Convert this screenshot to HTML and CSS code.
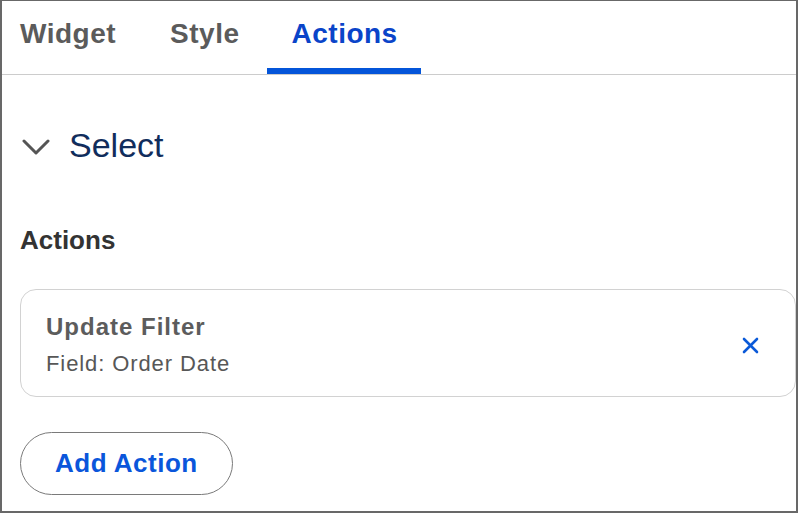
FILE: index.html
```html
<!DOCTYPE html>
<html lang="en">
<head>
  <meta charset="UTF-8">
  <meta name="viewport" content="width=device-width, initial-scale=1.0">
  <title>Widget Actions</title>
  <link rel="stylesheet" href="styles.css">
</head>
<body>
  <div class="panel">
    <div class="tabs">
      <div class="tab">Widget</div>
      <div class="tab">Style</div>
      <div class="tab active">Actions</div>
    </div>

    <div class="content">
      <div class="section-toggle">
        <svg class="chevron" width="28" height="16" viewBox="0 0 28 16">
          <polyline points="2,2 14,14 26,2" fill="none" stroke="currentColor" stroke-width="3" stroke-linecap="round" stroke-linejoin="round" />
        </svg>
        <span class="section-title">Select</span>
      </div>

      <div class="group-label">Actions</div>

      <div class="action-card">
        <div class="action-info">
          <div class="action-name">Update Filter</div>
          <div class="action-field">Field: Order Date</div>
        </div>
        <button class="remove-btn" title="Remove action">
          <svg width="17" height="17" viewBox="0 0 17 17">
            <line x1="2" y1="2" x2="15" y2="15" stroke="currentColor" stroke-width="2.6" stroke-linecap="round" />
            <line x1="15" y1="2" x2="2" y2="15" stroke="currentColor" stroke-width="2.6" stroke-linecap="round" />
          </svg>
        </button>
      </div>

      <button class="add-btn">Add Action</button>
    </div>
  </div>
</body>
</html>
```

FILE: styles.css
```css
body {
  margin: 0;
  font-family: "Liberation Sans", Arial, sans-serif;
  background-color: #ffffff;
}

.panel {
  box-sizing: border-box;
  width: 798px;
  height: 513px;
  border: 2px solid #686868;
  border-top-width: 1px;
  background-color: #ffffff;
  overflow: hidden;
}

/* Tab bar */
.tabs {
  display: flex;
  border-bottom: 1px solid #cccccc;
}

.tab {
  padding: 17px 27px 18px 27px;
  font-size: 28px;
  line-height: 32px;
  font-weight: bold;
  letter-spacing: 0.5px;
  color: #5b5b5b;
  border-bottom: 6px solid transparent;
  cursor: pointer;
}

.tab:first-child {
  padding-left: 18px;
}

.tab.active {
  padding-left: 25px;
  padding-right: 23px;
  color: #0a44c9;
  border-bottom-color: #0455d9;
}

/* Body */
.content {
  padding: 50px 0 0 18px;
}

.section-toggle {
  display: flex;
  align-items: center;
  gap: 19px;
  padding-left: 2px;
}

.chevron {
  color: #555555;
  margin-top: 4px;
}

.section-title {
  font-size: 34px;
  line-height: 40px;
  color: #112d5c;
}

.group-label {
  margin-top: 60px;
  font-size: 26px;
  line-height: 30px;
  font-weight: bold;
  color: #333333;
}

.action-card {
  display: flex;
  align-items: center;
  justify-content: space-between;
  margin-top: 34px;
  padding: 23px 36px 19px 25px;
  border: 1px solid #d2d2d2;
  border-radius: 16px;
}

.action-name {
  font-size: 24px;
  line-height: 28px;
  font-weight: bold;
  letter-spacing: 1px;
  color: #5c5c5c;
}

.action-field {
  margin-top: 10px;
  font-size: 22px;
  line-height: 26px;
  letter-spacing: 0.9px;
  color: #575757;
}

.remove-btn {
  display: flex;
  padding: 0;
  border: none;
  background: transparent;
  color: #0b5ad8;
  cursor: pointer;
}

.add-btn {
  margin-top: 35px;
  padding: 0 34px;
  height: 63px;
  border: 1px solid #7a7a7a;
  border-radius: 32px;
  background-color: #ffffff;
  font-family: inherit;
  font-size: 26px;
  font-weight: bold;
  letter-spacing: 0.5px;
  line-height: 61px;
  color: #0a56db;
  cursor: pointer;
}
```
